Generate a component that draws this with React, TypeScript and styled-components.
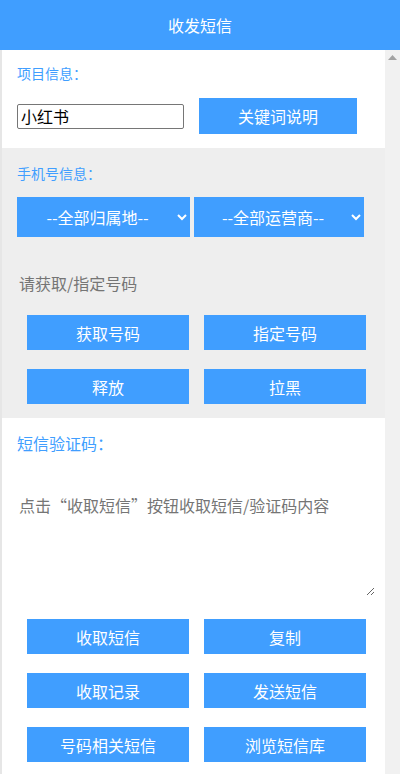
import styled, { createGlobalStyle } from "styled-components";

const primary = "#409eff";

const GlobalStyle = createGlobalStyle`
  html, body {
    margin: 0;
    padding: 0;
    background: #ffffff;
  }
  body {
    font-family: "Noto Sans CJK SC", "Noto Sans", sans-serif;
  }
  * {
    box-sizing: border-box;
  }
`;

const Page = styled.div`
  height: 100vh;
  display: flex;
  flex-direction: column;
  overflow: hidden;
`;

const Header = styled.header`
  height: 50px;
  flex-shrink: 0;
  background: ${primary};
  color: #ffffff;
  font-size: 16px;
  display: flex;
  align-items: center;
  justify-content: center;
`;

const Body = styled.div`
  flex: 1;
  display: flex;
  min-height: 0;
`;

const Content = styled.main`
  flex: 1;
  border-left: 2px solid #e6e6e6;
  overflow: hidden;
`;

const ScrollTrack = styled.div`
  width: 15px;
  flex-shrink: 0;
  background: #f1f1f1;
  display: flex;
  justify-content: center;
  padding-top: 5px;
`;

const Section = styled.section<{ $gray?: boolean; $pad: string }>`
  background: ${(p) => (p.$gray ? "#eeeeee" : "#ffffff")};
  padding: ${(p) => p.$pad};
`;

const Label = styled.div<{ $size?: number }>`
  color: ${primary};
  font-size: ${(p) => p.$size ?? 14}px;
  line-height: ${(p) => (p.$size ?? 14) + 6}px;
`;

const ProjectRow = styled.div`
  display: flex;
  align-items: center;
  gap: 15px;
  margin-top: 15px;
`;

const TextInput = styled.input`
  width: 167px;
  height: 25px;
  border: 1px solid #767676;
  border-radius: 2px;
  padding: 0 3px;
  font-family: inherit;
  font-size: 16px;
  color: #000000;
  outline: none;
`;

const Button = styled.button<{ $w?: number; $h?: number }>`
  width: ${(p) => p.$w ?? 162}px;
  height: ${(p) => p.$h ?? 35}px;
  border: none;
  background: ${primary};
  color: #ffffff;
  font-family: inherit;
  font-size: 16px;
  padding: 0;
  cursor: pointer;
`;

const SelectRow = styled.div`
  display: flex;
  gap: 4px;
  margin-top: 14px;
`;

const Select = styled.select<{ $w: number }>`
  width: ${(p) => p.$w}px;
  height: 40px;
  border: none;
  border-radius: 0;
  background-color: ${primary};
  color: #ffffff;
  font-family: inherit;
  font-size: 16px;
  text-align: center;
  text-align-last: center;
  outline: none;
`;

const Hint = styled.div`
  margin-top: 34px;
  padding-left: 2px;
  color: #757575;
  font-size: 16px;
  line-height: 24px;
`;

const ButtonGrid = styled.div<{ $top: number }>`
  display: grid;
  grid-template-columns: 162px 162px;
  column-gap: 15px;
  row-gap: 19px;
  margin-top: ${(p) => p.$top}px;
  padding-left: 10px;
`;

const MessageBox = styled.textarea`
  display: block;
  width: 358px;
  height: 123px;
  margin-top: 19px;
  border: none;
  outline: none;
  padding: 20px 2px 2px;
  font-family: inherit;
  font-size: 16px;
  color: #333333;
  resize: vertical;
  background: transparent;
  &::placeholder {
    color: #757575;
  }
`;

const UpArrow = () => (
  <svg width="9" height="5" viewBox="0 0 9 5">
    <path d="M0 5 L4.5 0 L9 5 Z" fill="#a3a3a3" />
  </svg>
);

const phoneButtons = ["获取号码", "指定号码", "释放", "拉黑"];
const smsButtons = [
  "收取短信",
  "复制",
  "收取记录",
  "发送短信",
  "号码相关短信",
  "浏览短信库",
];

export default function App() {
  return (
    <>
      <GlobalStyle />
      <Page>
        <Header>收发短信</Header>
        <Body>
          <Content>
            <Section $pad="13px 15px 14px">
              <Label>项目信息：</Label>
              <ProjectRow>
                <TextInput defaultValue="小红书" />
                <Button $w={158} $h={36}>
                  关键词说明
                </Button>
              </ProjectRow>
            </Section>

            <Section $gray $pad="15px 15px 14px">
              <Label>手机号信息：</Label>
              <SelectRow>
                <Select $w={173} defaultValue="">
                  <option value="">--全部归属地--</option>
                </Select>
                <Select $w={170} defaultValue="">
                  <option value="">--全部运营商--</option>
                </Select>
              </SelectRow>
              <Hint>请获取/指定号码</Hint>
              <ButtonGrid $top={20}>
                {phoneButtons.map((t) => (
                  <Button key={t}>{t}</Button>
                ))}
              </ButtonGrid>
            </Section>

            <Section $pad="14px 15px 20px">
              <Label $size={16}>短信验证码：</Label>
              <MessageBox placeholder="点击“收取短信”按钮收取短信/验证码内容" />
              <ButtonGrid $top={23}>
                {smsButtons.map((t) => (
                  <Button key={t}>{t}</Button>
                ))}
              </ButtonGrid>
            </Section>
          </Content>
          <ScrollTrack>
            <UpArrow />
          </ScrollTrack>
        </Body>
      </Page>
    </>
  );
}
